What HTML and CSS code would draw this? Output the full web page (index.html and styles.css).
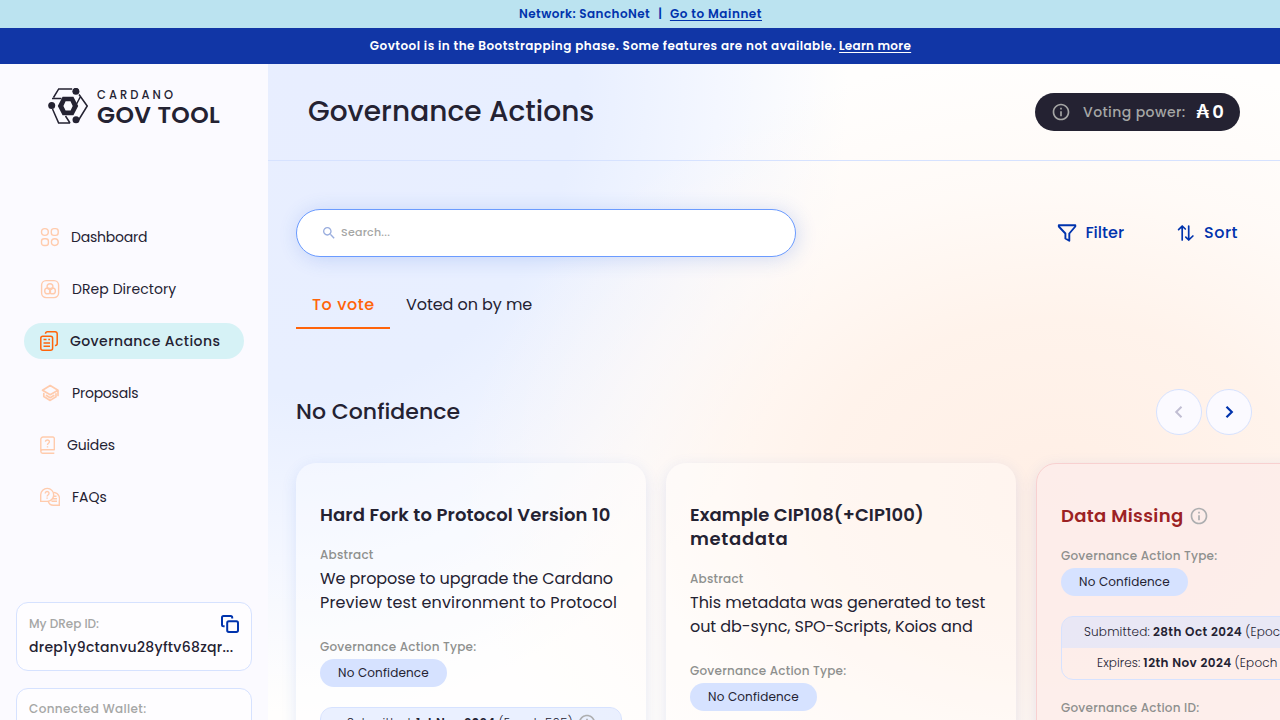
FILE: index.html
```html
<!DOCTYPE html>
<html lang="en">
<head>
<meta charset="utf-8">
<title>Governance Actions</title>
<link rel="stylesheet" href="styles.css">
</head>
<body>
<svg class="defs" width="0" height="0">
  <symbol id="info" viewBox="0 0 24 24"><path fill="currentColor" d="M11 7h2v2h-2zm0 4h2v6h-2zm1-9C6.480 2 2 6.480 2 12s4.480 10 10 10 10-4.480 10-10S17.520 2 12 2m0 18c-4.410 0-8-3.590-8-8s3.590-8 8-8 8 3.590 8 8-3.590 8-8 8"/></symbol>
</svg>
<div class="banner network"><span class="net">Network: SanchoNet</span><span class="bar">|</span><a class="mainnet">Go to Mainnet</a></div>
<div class="banner phase"><span class="phase-text">Govtool is in the Bootstrapping phase. Some features are not available.</span><a class="learn">Learn more</a></div>
<div class="layout">
  <aside class="sidebar">
    <div class="logo">
      <svg width="40" height="36" viewBox="0 0 40 36" fill="none" stroke="#242232" stroke-width="1.500">
        <path d="M5.500 9.500L10.700.9h13.500M4 10.500h9.500M31 6.500L39.200 18 30 33M32.500 8.500L27.500 18M4.500 21l6.100 13.900h11.500M17.500 28l4.500 7"/>
        <path fill="#242232" stroke="none" fill-rule="evenodd" d="M14.600 8.700h10.800L30.200 18l-4.800 9.200H14.600L9.800 18zM17.600 13.300L15.400 18l2.200 4.600h5L24.700 18l-2.200-4.700z"/>
        <circle cx="27.900" cy="3.300" r="3.500" fill="#242232" stroke="none"/><circle cx="3.700" cy="17.600" r="3.500" fill="#242232" stroke="none"/><circle cx="28" cy="31.800" r="3.500" fill="#242232" stroke="none"/>
      </svg>
      <div class="wordmark"><span class="wm-small">CARDANO</span><span class="wm-big">GOV TOOL</span></div>
    </div>
    <nav class="nav">
      <a class="item"><svg width="19" height="20" viewBox="0 0 19 20" fill="none" stroke="#ffcbad" stroke-width="1.400"><circle cx="4.900" cy="5" r="3.400"/><rect x="11.300" y="1.600" width="6.900" height="6.800" rx="2.600"/><rect x="1.500" y="11.700" width="6.900" height="6.800" rx="2.600"/><circle cx="14.800" cy="15.100" r="3.400"/></svg><span class="n1">Dashboard</span></a>
      <a class="item"><svg width="20" height="20" viewBox="0 0 20 20" fill="none" stroke="#ffcbad" stroke-width="1.400"><rect x="1.600" y="1.600" width="17" height="17" rx="4.500"/><circle cx="10" cy="7.600" r="2.900"/><circle cx="7.600" cy="11.900" r="2.900"/><circle cx="12.500" cy="11.900" r="2.900"/></svg><span class="n2">DRep Directory</span></a>
      <a class="item active"><svg width="18" height="20" viewBox="0 0 18 20" fill="none" stroke="#ff640a" stroke-width="1.500"><rect x=".8" y="5.200" width="11.800" height="14" rx="2"/><path d="M5.500 2.800V2.700A2 2 0 0 1 7.500.8h7.700a2 2 0 0 1 2 2v9.700a2 2 0 0 1-2 2h-.3M3.500 8.500h3M8.300 8.500H10M3.500 11.900h6.500M3.500 15.300H10"/></svg><span class="n3">Governance Actions</span></a>
      <a class="item"><svg width="20" height="20" viewBox="0 0 20 20" fill="none" stroke="#ffcbad" stroke-width="1.700" stroke-linejoin="round" stroke-linecap="round"><path d="M2.500 7.200L10.200 2.500 18 7.200l-7.800 4.500zM18 7.500v5M3.800 10.500v3l6.400 3.900 5.800-3.600v-3M6.500 12.500l3.700 2.200 3.600-2.200"/></svg><span class="n4">Proposals</span></a>
      <a class="item"><svg width="15" height="20" viewBox="0 0 15 20" fill="none" stroke="#ffcbad" stroke-width="1.400"><path d="M14.300 15.200V3.400a1.400 1.400 0 0 0-1.400-1.400H3A2.200 2.200 0 0 0 .8 4.200v12M14.300 14.700H2.600a1.700 1.700 0 0 0 0 3.500h11.700M5.500 6.800c0-2.600 4-2.300 3.900 0 0 1.500-1.900 1.500-1.900 3.200M7.500 11.300v1.200"/></svg><span class="n5">Guides</span></a>
      <a class="item"><svg width="20" height="20" viewBox="0 0 20 20" fill="none" stroke="#ffcbad" stroke-width="1.400"><path d="M.7 14.400V7.700a6.500 6.500 0 1 1 6.500 6.700zM13.800 5.400c5.700.8 6.200 6 5.500 8.800v4h-6c-2.500 0-4.300-1.500-5-3.700M5.200 6.500c0-2.700 3.900-2.500 3.800 0 0 1.500-1.900 1.500-1.900 2.900M7.100 10.600v1.200M14 9.200h2.500M13 11.700h4M11.500 14.300H17"/></svg><span class="n6">FAQs</span></a>
    </nav>
    <div class="wallets">
      <div class="wallet"><div class="wl-top">My DRep ID:</div><div class="wl-id">drep1y9ctanvu28yftv68zqr...</div>
        <svg class="copy" width="18" height="18" viewBox="0 0 18 18" fill="none" stroke="#0033ad" stroke-width="2"><rect x="6.200" y="6.300" width="10.800" height="10.600" rx="1.600"/><path d="M3.600 11.200H2.500A1.500 1.500 0 0 1 1 9.700V2.500A1.500 1.500 0 0 1 2.500 1h7.200a1.500 1.500 0 0 1 1.500 1.500v1"/></svg>
      </div>
      <div class="wallet connected"><div class="wl-top">Connected Wallet:</div></div>
    </div>
  </aside>
  <main class="main">
    <header class="header"><h1>Governance Actions</h1>
      <div class="power"><svg width="20" height="20"><use href="#info"/></svg><span class="vp">Voting power:</span><b>₳<span class="zero">0</span></b></div>
    </header>
    <section class="content">
      <div class="tools">
        <div class="search"><svg width="16" height="16" viewBox="0 0 24 24"><path fill="#99adde" d="M15.500 14h-.79l-.28-.27C15.410 12.590 16 11.110 16 9.500 16 5.910 13.090 3 9.500 3S3 5.910 3 9.500 5.910 16 9.500 16c1.610 0 3.090-.59 4.230-1.570l.27.28v.79l5 4.990L20.490 19zm-6 0C7.010 14 5 11.990 5 9.500S7.010 5 9.500 5 14 7.010 14 9.500 11.990 14 9.500 14"/></svg><span>Search...</span></div>
        <div class="actions">
          <div class="action"><svg width="20" height="20" viewBox="0 0 20 20" fill="none" stroke="#0033ad" stroke-width="1.900" stroke-linejoin="round"><path d="M1.800 2.300h16.500v1.200L12.300 10.500v7.300l-3.900-2.300v-5L1.800 3.500z"/></svg><span class="filter">Filter</span></div>
          <div class="action sorter"><svg width="18" height="18" viewBox="0 0 18 18" fill="none" stroke="#0033ad" stroke-width="1.700" stroke-linecap="round" stroke-linejoin="round"><path d="M5.200 16V2M1.600 5.600L5.200 2 8.300 5M11.700 2v14M8.800 13.200l2.900 2.800 4.200-4"/></svg><span class="sort">Sort</span></div>
        </div>
      </div>
      <div class="tabs"><div class="tab on"><span>To vote</span></div><div class="tab off"><span>Voted on by me</span></div></div>
      <div class="group"><h2>No Confidence</h2>
        <div class="arrows">
          <div class="arrow"><svg width="14" height="14" viewBox="0 0 14 14" fill="none" stroke="#c1bed3" stroke-width="2"><path d="M9.500 1.700L4.200 7l5.300 5.300"/></svg></div>
          <div class="arrow"><svg width="14" height="14" viewBox="0 0 14 14" fill="none" stroke="#0033ad" stroke-width="2.200"><path d="M4.500 1.700L9.800 7l-5.300 5.300"/></svg></div>
        </div>
      </div>
      <div class="cards">
        <article class="card">
          <h3 class="t1">Hard Fork to Protocol Version 10</h3>
          <div class="label ab">Abstract</div>
          <div class="abstract"><div class="a1">We propose to upgrade the Cardano</div><div class="a2">Preview test environment to Protocol</div></div>
          <div class="label gt">Governance Action Type:</div>
          <div class="chip">No Confidence</div>
          <div class="dates"><div class="date first"><span class="sub">Submitted:</span><b class="d1">1st Nov 2024</b><span class="ep">(Epoch 505)</span><svg width="20" height="20"><use href="#info"/></svg></div><div class="date"></div></div>
        </article>
        <article class="card">
          <h3><span class="t2">Example CIP108(+CIP100)</span><br><span class="t3">metadata</span></h3>
          <div class="label ab">Abstract</div>
          <div class="abstract"><div class="a3">This metadata was generated to test</div><div class="a4">out db-sync, SPO-Scripts, Koios and</div></div>
          <div class="label gt">Governance Action Type:</div>
          <div class="chip">No Confidence</div>
          <div class="dates"></div>
        </article>
        <article class="card missing">
          <h3 class="bad"><span class="t4">Data Missing</span><svg width="20" height="20"><use href="#info"/></svg></h3>
          <div class="label gt">Governance Action Type:</div>
          <div class="chip">No Confidence</div>
          <div class="dates"><div class="date first"><span class="sub">Submitted:</span><b class="d2">28th Oct 2024</b><span class="ep">(Epoch 501)</span></div><div class="date exp"><span class="ex">Expires:</span><b class="d3">12th Nov 2024</b><span class="ep">(Epoch 516)</span></div></div>
          <div class="label gid">Governance Action ID:</div>
        </article>
      </div>
    </section>
  </main>
</div>
</body>
</html>
```
FILE: styles.css
```css
* { box-sizing: border-box; margin: 0; }
body { height: 720px; overflow: hidden; font-family: Poppins, Inter, "Open Sans", sans-serif; color: #242232; font-size: 14px; display: flex; flex-direction: column; }
svg { flex: none; display: block; }
span, h1, h2, h3 { white-space: nowrap; }
.defs { position: absolute; }
.banner { display: flex; justify-content: center; align-items: center; flex: none; font-size: 12px; font-weight: 600; }
.banner a { text-decoration: underline; text-decoration-thickness: 1px; text-underline-offset: 2px; }
.network { height: 28px; background: #bbe3f0; color: #0033ad; gap: 8px; padding-left: 1px; }
.phase { height: 36px; background: #1136a6; color: #fff; gap: 3px; padding-left: 1px; }
.net { letter-spacing: .42px; }
.mainnet { letter-spacing: .54px; }
.phase-text { letter-spacing: .47px; }
.learn { letter-spacing: .3px; }
.layout { display: flex; flex: 1; min-height: 0; }
.sidebar { width: 268px; flex: none; background: #fbfaff; display: flex; flex-direction: column; overflow: hidden; }
.logo { display: flex; gap: 9px; padding: 24px 0 0 48px; height: 155px; flex: none; }
.wordmark { display: flex; flex-direction: column; }
.wm-small { font-size: 11.500px; font-weight: 500; line-height: 14px; letter-spacing: 3.050px; }
.wm-big { font-size: 23.500px; font-weight: 600; line-height: 25px; letter-spacing: .4px; }
.nav { display: flex; flex-direction: column; gap: 16px; padding: 0 24px; }
.item { height: 36px; border-radius: 18px; display: flex; align-items: center; gap: 12px; padding-left: 16px; }
.active { background: #d6f2f6; font-weight: 500; }
.n1, .n4 { letter-spacing: -.22px; }
.n2 { letter-spacing: .07px; }
.n3 { letter-spacing: .42px; }
.n5 { letter-spacing: -.15px; }
.wallets { padding: 87px 16px 0; display: flex; flex-direction: column; gap: 17px; }
.wallet { position: relative; height: 69px; flex: none; border: 1px solid #d6e2ff; border-radius: 12px; background: #fefdff; padding: 11px 12px; }
.connected { padding-top: 10px; letter-spacing: .35px; }
.wl-top { font-size: 12px; font-weight: 500; line-height: 20px; color: #a5a6a5; }
.wl-id { font-size: 14px; font-weight: 500; line-height: 26px; white-space: nowrap; letter-spacing: .28px; }
.copy { position: absolute; right: 12px; top: 12px; }
.main { flex: 1; min-width: 0; overflow: hidden; background: radial-gradient(ellipse 600px 440px at 790px 430px, rgba(255,238,228,.95) 0, rgba(255,241,232,.85) 40%, rgba(255,247,242,.55) 70%, rgba(255,252,250,0) 100%), radial-gradient(ellipse 540px 640px at 40px 10px, #e8eeff 0, #e8efff 50%, #f4f7ff 76%, rgba(255,255,255,0) 100%), #fffefd; }
.header { height: 97px; border-bottom: 1px solid #d6e2ff; display: flex; align-items: center; justify-content: space-between; padding: 0 40px; }
h1 { font-size: 28px; font-weight: 500; line-height: 40px; letter-spacing: .05px; }
.power { height: 38px; width: 205px; border-radius: 19px; background: #242232; color: #a5a6a5; display: flex; align-items: center; padding: 0 16px; font-weight: 500; }
.power b { color: #fff; font-size: 18px; font-weight: 600; margin-left: auto; line-height: 24px; }
.vp { margin-left: 12px; letter-spacing: .42px; }
.zero { margin-left: 3px; }
.content { padding: 48px 28px 0; }
.tools { display: flex; justify-content: space-between; align-items: center; }
.search { width: 500px; height: 48px; border: 1px solid #6b9bff; border-radius: 24px; background: #fff; box-shadow: 2px 2px 20px rgba(47,98,220,.2); padding-left: 24px; display: flex; align-items: center; gap: 4px; color: #a5a6a5; font-size: 11px; font-weight: 500; letter-spacing: .25px; }
.search span { padding-bottom: 2px; }
.actions { display: flex; gap: 53px; padding-right: 14px; color: #0033ad; font-size: 16px; font-weight: 500; }
.action { display: flex; align-items: center; gap: 8px; }
.action span { padding-bottom: 2px; }
.sorter { gap: 9px; }
.sort { letter-spacing: .5px; }
.tabs { display: flex; margin-top: 24px; font-size: 16px; }
.tab { height: 48px; padding: 0 16px; display: flex; align-items: center; }
.on { color: #ff640a; font-weight: 500; border-bottom: 2px solid #ff640a; width: 94px; padding-top: 1px; letter-spacing: .6px; }
.off { padding-bottom: 2px; letter-spacing: -.07px; }
.group { display: flex; justify-content: space-between; align-items: center; margin-top: 60px; }
h2 { font-size: 22px; font-weight: 500; padding-bottom: 2px; letter-spacing: .04px; }
.arrows { display: flex; gap: 4px; }
.arrow { width: 46px; height: 46px; border: 1px solid #d6e2ff; border-radius: 50%; background: #fbfaff; display: flex; align-items: center; justify-content: center; }
.cards { display: flex; gap: 20px; margin-top: 28px; }
.card { width: 350px; height: 420px; flex: none; border-radius: 20px; background: rgba(255,255,255,.35); box-shadow: 0 4px 15px rgba(47,98,220,.13); padding: 40px 24px; background-clip: padding-box; }
.missing { border: 1px solid #f8d0d0; background: rgba(253,236,234,.85); }
h3 { font-size: 18px; font-weight: 600; line-height: 24px; }
.t1 { letter-spacing: .13px; }
.t2 { letter-spacing: .1px; }
.t3 { letter-spacing: .7px; }
.t4 { letter-spacing: .33px; }
.bad { color: #9c2224; display: flex; align-items: center; gap: 6px; }
.bad svg, .date svg { color: #adaeb0; }
.label { font-size: 12px; font-weight: 500; line-height: 16px; color: #8e908e; white-space: nowrap; letter-spacing: .22px; }
.ab { margin-top: 20px; }
.abstract { font-size: 16px; line-height: 24px; margin-top: 4px; white-space: nowrap; }
.a1, .a4 { letter-spacing: -.09px; }
.a2 { letter-spacing: .15px; }
.a3 { letter-spacing: -.03px; }
.label.gt { margin-top: 24px; }
.bad + .label.gt { margin-top: 20px; }
.chip { width: 127px; height: 28px; margin-top: 4px; border-radius: 14px; background: #d6e2ff; font-size: 12px; display: flex; align-items: center; justify-content: center; white-space: nowrap; letter-spacing: .15px; }
.dates { width: 302px; height: 64px; margin-top: 20px; border: 1px solid #d6e2ff; border-radius: 12px; overflow: hidden; }
.date { height: 31px; font-size: 12px; font-weight: 300; display: flex; align-items: center; white-space: nowrap; padding: 0 0 1px 22px; gap: 3px; letter-spacing: .2px; }
.card:first-child .date { padding-left: 26px; }
.date b { font-weight: 600; letter-spacing: .43px; }
.date svg { margin-left: 1px; }
.date.exp { padding-left: 35px; }
.ex { letter-spacing: .1px; }
.first { background: rgba(214,226,255,.5); }
.label.gid { margin-top: 20px; }
```
